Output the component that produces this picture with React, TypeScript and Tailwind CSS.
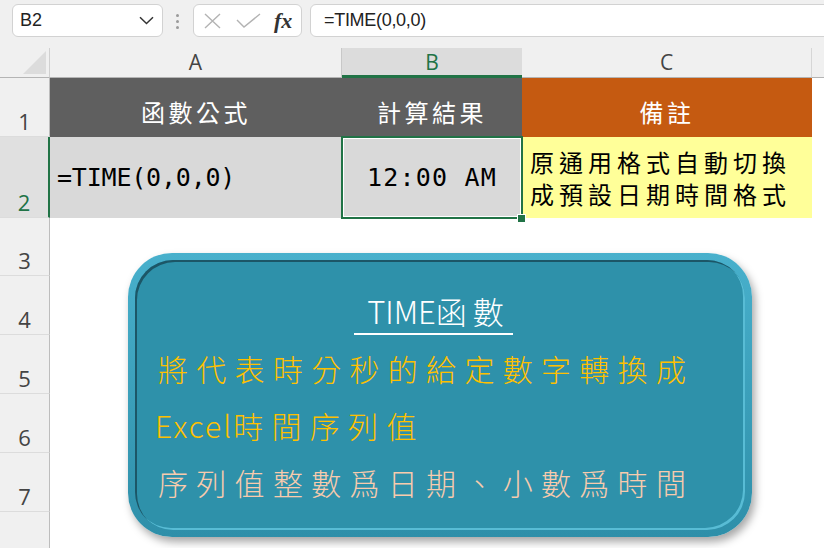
import React from "react";

const ui = "font-['Open_Sans','Noto_Sans',sans-serif]";
const cjk = "font-['Noto_Sans_CJK_TC','Noto_Sans',sans-serif]";
const mono = "font-['DejaVu_Sans_Mono','Noto_Sans_CJK_TC',monospace]";

function RowHead({ n, active }: { n: number; active?: boolean }) {
  return (
    <div
      className={`flex items-end justify-center pb-[4px] border-b border-[#dcdcdc] ${
        active
          ? "bg-[#e0e0e0] border-r-2 border-r-[#217346] text-[#217346]"
          : "bg-[#f0f0f0] border-r border-r-[#bdbdbd] text-[#444]"
      } ${ui} text-[22px] leading-none`}
    >
      {n}
    </div>
  );
}

export default function App() {
  return (
    <div className="relative w-[824px] h-[548px] overflow-hidden bg-white">
      {/* formula bar */}
      <div className={`h-[48px] bg-[#f0f0f0] flex items-start pt-[4px] ${ui}`}>
        <div className="ml-[12px] w-[151px] h-[33px] bg-white border border-[#d2d2d2] rounded-[6px] flex items-center justify-between pl-[7px] pr-[8px]">
          <span className="text-[18px] text-[#222] font-['Liberation_Sans',sans-serif]">B2</span>
          <svg width="15" height="9" viewBox="0 0 15 9">
            <path d="M1 1.2 L7.5 7.5 L14 1.2" fill="none" stroke="#333" strokeWidth="1.5" />
          </svg>
        </div>
        <div className="ml-[13px] mt-[10px] flex flex-col gap-[3px]">
          <span className="w-[3px] h-[3px] bg-[#9a9a9a] rounded-full" />
          <span className="w-[3px] h-[3px] bg-[#9a9a9a] rounded-full" />
          <span className="w-[3px] h-[3px] bg-[#9a9a9a] rounded-full" />
        </div>
        <div className="ml-[14px] w-[109px] h-[33px] bg-white border border-[#d2d2d2] rounded-[6px] flex items-center pl-[10px]">
          <svg width="17" height="16" viewBox="0 0 17 16">
            <path d="M1 1 L16 15 M16 1 L1 15" stroke="#b3b3b3" strokeWidth="1.4" fill="none" />
          </svg>
          <svg className="ml-[15px]" width="25" height="15" viewBox="0 0 25 15">
            <path d="M1 7 L8 14 L24 1" stroke="#b3b3b3" strokeWidth="1.4" fill="none" />
          </svg>
          <span className="ml-[13px] text-[22px] leading-none italic font-bold text-[#333] font-['Liberation_Serif',serif]">
            fx
          </span>
        </div>
        <div className="ml-[8px] flex-1 -mr-[10px] h-[33px] bg-white border border-[#d2d2d2] rounded-[6px] flex items-center pl-[13px]">
          <span className="text-[18px] text-[#222] font-['Liberation_Sans',sans-serif] tracking-[-0.3px]">=TIME(0,0,0)</span>
        </div>
      </div>

      {/* sheet */}
      <div className="grid grid-cols-[50px_292px_180px_290px_1fr] grid-rows-[30px_59px_81px_58px_59px_59px_59px_59px_59px]">
        {/* column headers */}
        <div className="relative bg-[#f0f0f0] border-r border-[#d0d0d0] border-b border-b-[#b4b4b4]">
          <svg className="absolute right-[3px] bottom-[3px]" width="23" height="23" viewBox="0 0 23 23">
            <path d="M23 0 L23 23 L0 23 Z" fill="#dcdcdc" />
          </svg>
        </div>
        <div className={`bg-[#f0f0f0] border-b border-[#b4b4b4] border-r border-r-[#c8c8c8] flex items-center justify-center text-[21px] text-[#444] ${ui}`}>
          A
        </div>
        <div className={`bg-[#dcdcdc] border-b-[3px] border-[#217346] flex items-center justify-center pt-[3px] text-[21px] text-[#217346] ${ui}`}>
          B
        </div>
        <div className={`bg-[#f0f0f0] border-b border-[#b4b4b4] border-r border-r-[#d6d6d6] flex items-center justify-center text-[21px] text-[#444] ${ui}`}>
          C
        </div>
        <div className="bg-[#f0f0f0] border-b border-[#b4b4b4]" />

        {/* row 1 */}
        <RowHead n={1} />
        <div className={`bg-[#5f5f5f] flex items-end justify-center pb-[13px] text-white text-[24px] leading-none tracking-[3.5px] ${cjk}`}>
          函數公式
        </div>
        <div className={`bg-[#5f5f5f] flex items-end justify-center pb-[13px] text-white text-[24px] leading-none tracking-[3.5px] ${cjk}`}>
          計算結果
        </div>
        <div className={`bg-[#c55a11] flex items-end justify-center pb-[13px] text-white text-[24px] leading-none tracking-[3.5px] ${cjk}`}>
          備註
        </div>
        <div />

        {/* row 2 */}
        <RowHead n={2} active />
        <div className={`bg-[#d9d9d9] flex items-center pl-[7px] text-[25px] text-black tracking-[-0.2px] ${mono}`}>
          =TIME(0,0,0)
        </div>
        <div className="relative bg-[#d9d9d9] flex items-center justify-center">
          <span className={`text-[25px] text-black tracking-[1.2px] ${mono}`}>12:00 AM</span>
          <div className="absolute -left-[1px] -top-[1px] -right-[1px] -bottom-[1px] border-2 border-[#217346] shadow-[inset_0_0_0_1px_#ffffff]" />
          <div className="absolute -right-[3px] -bottom-[4px] w-[7px] h-[7px] bg-[#217346] outline outline-1 outline-white" />
        </div>
        <div className={`bg-[#ffff99] flex flex-col justify-center pl-[8px] text-black text-[24px] leading-[32px] tracking-[5px] ${cjk}`}>
          <span>原通用格式自動切換</span>
          <span>成預設日期時間格式</span>
        </div>
        <div />

        {[3, 4, 5, 6, 7, 8].map((n) => (
          <React.Fragment key={n}>
            <RowHead n={n} />
            <div />
            <div />
            <div />
            <div />
          </React.Fragment>
        ))}
      </div>

      {/* floating rounded text box */}
      <div className="absolute left-[128px] top-[253px] w-[624px] h-[284px] rounded-[44px] p-[7px] bg-gradient-to-b from-[#48b0cc] to-[#2e8fa9] shadow-[3px_5px_8px_rgba(0,0,0,0.35)]">
        <div className={`w-full h-full rounded-[38px] bg-[#2e91aa] shadow-[inset_2px_2px_0_#1c5667,inset_-2px_-2px_0_#58bcd5] flex flex-col pt-[31px] pl-[23px] font-light ${cjk}`}>
          <div className="self-center -ml-[36px] border-b-2 border-white pl-[13px] pr-[3px] pb-[2px] text-white text-[31px] leading-[40px]">
            TIME<span className="tracking-[6px]">函數</span>
          </div>
          <div className="mt-[5px] text-[#ffc000] text-[30px] leading-[57px] tracking-[8.3px]">
            將代表時分秒的給定數字轉換成
          </div>
          <div className="text-[#ffc000] text-[30px] leading-[57px] tracking-[8.3px] -ml-[3px]">
            <span className="tracking-[2px]">Excel</span>時間序列值
          </div>
          <div className="text-[#f8cbad] text-[30px] leading-[57px] tracking-[8.3px]">
            序列值整數爲日期、小數爲時間
          </div>
        </div>
      </div>
    </div>
  );
}
